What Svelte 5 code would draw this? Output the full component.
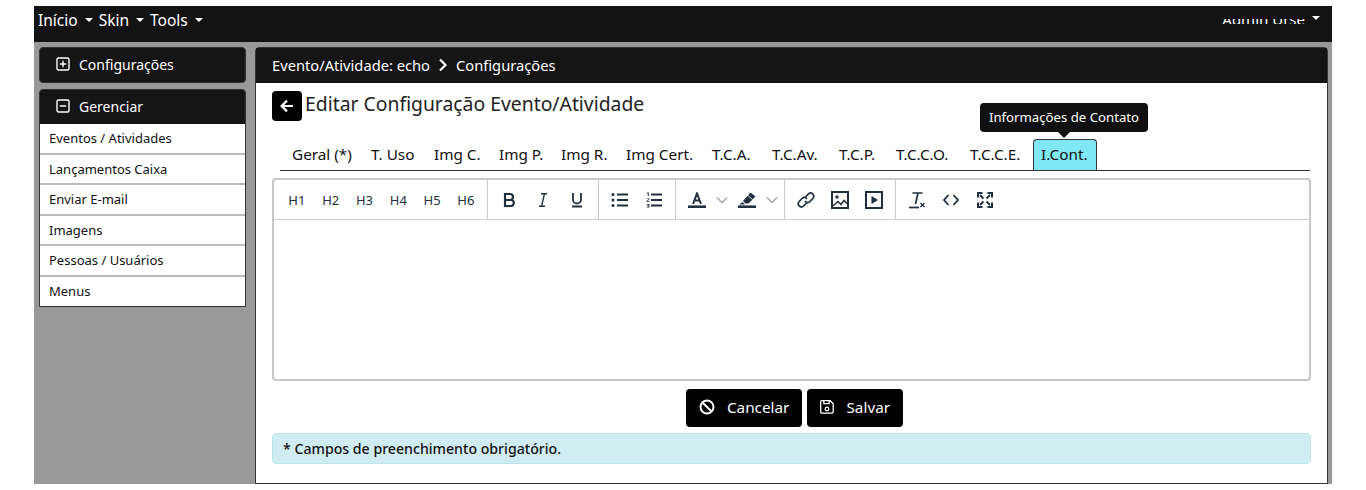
<script>
  const menu = ['Início', 'Skin', 'Tools'];
  const sideItems = ['Eventos / Atividades', 'Lançamentos Caixa', 'Enviar E-mail', 'Imagens', 'Pessoas / Usuários', 'Menus'];
  // widths keep each tab on the same column as the reference's font metrics
  const tabs = [
    { label: 'Geral (*)', width: 77 },
    { label: 'T. Uso', width: 61 },
    { label: 'Img C.', width: 63 },
    { label: 'Img P.', width: 60 },
    { label: 'Img R.', width: 63 },
    { label: 'Img Cert.', width: 84 },
    { label: 'T.C.A.', width: 58 },
    { label: 'T.C.Av.', width: 65 },
    { label: 'T.C.P.', width: 55 },
    { label: 'T.C.C.O.', width: 72 },
    { label: 'T.C.C.E.', width: 70 },
    { label: 'I.Cont.', width: 64, active: true }
  ];
  const headings = ['H1', 'H2', 'H3', 'H4', 'H5', 'H6'];
</script>

<div class="page">
  <nav class="navbar">
    <div class="nav-left">
      {#each menu as item}
        <span class="nav-item">{item}<i class="caret"></i></span>
      {/each}
    </div>
    <div class="nav-user">
      <div class="user-clip"><span>Admin Urse</span></div>
      <i class="caret user-caret"></i>
    </div>
  </nav>

  <div class="content">
    <aside class="sidebar">
      <div class="side-card">
        <div class="side-head">
          <svg width="14" height="14" viewBox="0 0 14 14" fill="none" stroke="#fff" stroke-width="1.4"><rect x="1" y="1" width="12" height="12" rx="1.5"/><path d="M7 3.8v6.4M3.8 7h6.4"/></svg>
          <span>Configurações</span>
        </div>
      </div>
      <div class="side-card manage">
        <div class="side-head">
          <svg width="14" height="14" viewBox="0 0 14 14" fill="none" stroke="#fff" stroke-width="1.4"><rect x="1" y="1" width="12" height="12" rx="1.5"/><path d="M3.8 7h6.4"/></svg>
          <span>Gerenciar</span>
        </div>
        <ul class="side-list">
          {#each sideItems as item}
            <li>{item}</li>
          {/each}
        </ul>
      </div>
    </aside>

    <main class="panel">
      <div class="panel-head">
        <span>Evento/Atividade: echo</span>
        <svg width="10" height="14" viewBox="0 0 10 14" fill="none" stroke="#fff" stroke-width="2.2"><path d="M2 1.5 7.5 7 2 12.5"/></svg>
        <span>Configurações</span>
      </div>

      <div class="panel-body">
        <div class="title-row">
          <button class="back" aria-label="Voltar">
            <svg width="16" height="16" viewBox="0 0 16 16" fill="none" stroke="#fff" stroke-width="2.2"><path d="M14 8H2.8M8 2.6 2.6 8 8 13.4"/></svg>
          </button>
          <h1>Editar Configuração Evento/Atividade</h1>
        </div>

        <div class="tabs">
          {#each tabs as tab}
            <span class="tab" class:active={tab.active} style="width: {tab.width}px">{tab.label}</span>
          {/each}
          <div class="tooltip">Informações de Contato</div>
        </div>

        <div class="editor">
          <div class="toolbar">
            <div class="group first">
              {#each headings as h}
                <span class="tool h">{h}</span>
              {/each}
            </div>
            <div class="group">
              <span class="tool"><svg width="16" height="16" viewBox="0 0 16 16" fill="none" stroke="#222f3e" stroke-width="2.2"><path d="M4 2h5a3 3 0 0 1 0 6H4zM4 8h5.800a3 3 0 0 1 0 6H4zM4 1v14"/></svg></span>
              <span class="tool"><svg width="16" height="16" viewBox="0 0 16 16" fill="none" stroke="#222f3e" stroke-width="1.4"><path d="M6 1.700h6M4 14.300h6M9.500 1.700 6.500 14.300"/></svg></span>
              <span class="tool"><svg width="16" height="16" viewBox="0 0 16 16" fill="none" stroke="#222f3e" stroke-width="1.800"><path d="M4 1v6.500a4 4 0 0 0 8 0V1M3 14.500h10"/></svg></span>
            </div>
            <div class="group">
              <span class="tool"><svg width="18" height="16" viewBox="0 0 18 16" fill="#222f3e"><circle cx="2" cy="2.500" r="1.500"/><circle cx="2" cy="8" r="1.500"/><circle cx="2" cy="13.500" r="1.500"/><path d="M6 1.500h11v2H6zM6 7h11v2H6zM6 12.500h11v2H6z"/></svg></span>
              <span class="tool"><svg width="16" height="16" viewBox="0 0 16 16" fill="#222f3e"><path d="M5 1.500h11v2H5zM5 7h11v2H5zM5 12.500h11v2H5z"/><path d="M1 .5h1.800v3.500h-1V1.500H1zM.6 6.400h2.800v1.200L1.800 9h1.600v.8H.6V9l1.800-1.500v-.4H.6zM.6 12h2.800v3.500H.6v-.8h1.900v-.5H1.300v-.7h1.200v-.7H.6z"/></svg></span>
            </div>
            <div class="group">
              <span class="tool"><svg width="18" height="16" viewBox="0 0 18 16" fill="none" stroke="#222f3e"><path stroke-width="2" d="M5 12 9 1.500 13 12M6.400 8.500h5.200"/><path stroke-width="2.600" d="M0 14.700h18"/></svg></span>
              <span class="chev"><svg width="12" height="8" viewBox="0 0 12 8" fill="none" stroke="#a9adb3" stroke-width="1.600"><path d="M1 1.500 6 6.500 11 1.500"/></svg></span>
              <span class="tool"><svg width="18" height="16" viewBox="0 0 18 16" fill="#222f3e"><path d="M12.500.5 17.500 4.500 10.500 11.500H7.500L5 9z"/><path d="M4.500 10 7 12.500H1z"/><path d="M0 13.400h18V16H0z"/><path d="M10 3.500 14.500 7.500" stroke="#fff" stroke-width=".8"/></svg></span>
              <span class="chev"><svg width="12" height="8" viewBox="0 0 12 8" fill="none" stroke="#a9adb3" stroke-width="1.600"><path d="M1 1.500 6 6.500 11 1.500"/></svg></span>
            </div>
            <div class="group">
              <span class="tool"><svg width="18" height="18" viewBox="0 0 18 18" fill="none" stroke="#222f3e" stroke-width="1.700" stroke-linecap="round"><path d="M8.500 6 11.500 2.800a3.200 3.200 0 0 1 4.500 4.500L13 10.500a3.200 3.200 0 0 1-4.500 0"/><path d="M9.500 12 6.500 15.200a3.200 3.200 0 0 1-4.500-4.500L5 7.500a3.200 3.200 0 0 1 4.500 0"/></svg></span>
              <span class="tool"><svg width="18" height="18" viewBox="0 0 18 18" fill="none" stroke="#222f3e" stroke-width="2"><rect x="1" y="1" width="16" height="16"/><path stroke-width="1.500" d="M2 15 7 10.500 10 13.500 13 9.500 16.500 13"/><circle cx="6" cy="6" r="1.700" fill="#222f3e" stroke="none"/></svg></span>
              <span class="tool"><svg width="18" height="18" viewBox="0 0 18 18" fill="none" stroke="#222f3e" stroke-width="2"><rect x="1" y="1" width="16" height="16"/><path d="M6.500 5v8L13 9z" fill="#222f3e" stroke="none"/></svg></span>
            </div>
            <div class="group last">
              <span class="tool"><svg width="18" height="18" viewBox="0 0 18 18" fill="none" stroke="#222f3e"><path stroke-width="1.700" d="M4.500 2h10M10 2 7.500 13"/><path stroke-width="1.700" d="M1 16.500h10"/><path stroke-width="1.400" d="M12.500 12l4 4M16.500 12l-4 4"/></svg></span>
              <span class="tool"><svg width="16" height="12" viewBox="0 0 16 12" fill="none" stroke="#222f3e" stroke-width="1.800"><path d="M5.500 1 1 6l4.500 5M10.500 1 15 6l-4.500 5"/></svg></span>
              <span class="tool"><svg width="16" height="16" viewBox="0 0 16 16" fill="none" stroke="#222f3e" stroke-width="2"><path d="M5.500 1H1v4.500M10.500 1H15v4.500M5.500 15H1v-4.500M10.500 15H15v-4.500"/><path stroke-width="1.800" d="M3 3l3.500 3.500M13 3 9.500 6.500M3 13l3.500-3.500M13 13 9.500 9.500"/></svg></span>
            </div>
          </div>
          <div class="editor-area"></div>
        </div>

        <div class="actions">
          <button class="btn">
            <svg width="16" height="16" viewBox="0 0 16 16" fill="none" stroke="#fff" stroke-width="2"><circle cx="8" cy="8" r="6.500"/><path d="M3.500 3.500l9 9"/></svg>
            Cancelar
          </button>
          <button class="btn">
            <svg width="14" height="14" viewBox="0 0 14 14" fill="none" stroke="#fff" stroke-width="1.300"><path d="M1.700.7h8.500l3 3v8a1.500 1.500 0 0 1-1.500 1.500H1.700a1 1 0 0 1-1-1V1.700a1 1 0 0 1 1-1z"/><path d="M3.800.7v3h5.400v-3"/><circle cx="7" cy="9" r="1.800"/></svg>
            Salvar
          </button>
        </div>

        <div class="alert">* Campos de preenchimento obrigatório.</div>
      </div>
    </main>
  </div>
</div>

<style>
  :global(body) {
    margin: 0;
    background: #fff;
    font-family: "Noto Sans", "Open Sans", sans-serif;
  }

  .page {
    width: 1298px;
    height: 478px;
    margin: 6px 0 0 34px;
    background: #999;
    display: flex;
    flex-direction: column;
  }

  .navbar {
    height: 36px;
    flex: none;
    background: #131313;
    color: #fff;
    display: flex;
    justify-content: space-between;
    padding: 0 12px 0 4px;
  }

  .nav-left {
    display: flex;
    gap: 6px;
    height: 28px;
    align-items: center;
    font-size: 15.500px;
  }

  .nav-item {
    display: flex;
    align-items: center;
  }

  .caret {
    display: block;
    width: 0;
    height: 0;
    margin-left: 7px;
    border-left: 4px solid transparent;
    border-right: 4px solid transparent;
    border-top: 4px solid #fff;
  }

  .nav-user {
    display: flex;
    align-items: flex-start;
  }

  .user-clip {
    height: 5px;
    margin-top: 13px;
    overflow: hidden;
    font-size: 15px;
    line-height: 16px;
    display: flex;
    align-items: flex-end;
  }

  .user-clip span {
    margin-bottom: -3px;
  }

  .user-caret {
    margin-top: 10px;
  }

  .content {
    flex: 1;
    min-height: 0;
    display: flex;
    gap: 9px;
    padding: 5px 4px 0 5px;
  }

  .sidebar {
    width: 207px;
    flex: none;
    display: flex;
    flex-direction: column;
    gap: 6px;
  }

  .side-card {
    border: 1px solid #333;
    border-radius: 4px;
    background: #151515;
    overflow: hidden;
  }

  .side-card.manage {
    border-radius: 4px 4px 0 0;
  }

  .side-head {
    height: 34px;
    box-sizing: border-box;
    display: flex;
    align-items: center;
    gap: 9px;
    padding: 0 0 2px 16px;
    color: #fff;
    font-size: 14px;
  }

  .side-list {
    list-style: none;
    margin: 0;
    padding: 0;
    background: #fff;
  }

  .side-list li {
    height: 28.500px;
    padding-left: 9px;
    border-bottom: 2px solid #bbb;
    font-size: 13px;
    line-height: 29.500px;
    color: #111;
  }

  .side-list li:last-child {
    height: 29.500px;
    border-bottom: 0;
  }

  .panel {
    flex: 1;
    min-width: 0;
    background: #fff;
    border: 1px solid #333;
    border-radius: 4px 4px 0 0;
    display: flex;
    flex-direction: column;
  }

  .panel-head {
    height: 35px;
    box-sizing: border-box;
    flex: none;
    background: #151515;
    color: #fff;
    font-size: 14.700px;
    display: flex;
    align-items: center;
    gap: 8px;
    padding: 0 0 2px 16px;
  }

  .panel-body {
    padding: 8px 16px 0;
  }

  .title-row {
    display: flex;
    align-items: flex-start;
    gap: 3px;
    height: 30px;
  }

  .back {
    width: 30px;
    height: 30px;
    border: 0;
    padding: 0;
    border-radius: 4px;
    background: #000;
    display: flex;
    align-items: center;
    justify-content: center;
  }

  h1 {
    margin: 0;
    font-size: 19.350px;
    font-weight: 400;
    line-height: 26px;
    color: #222;
  }

  .tabs {
    position: relative;
    margin: 18px 0 0 8px;
    padding-left: 2px;
    box-sizing: border-box;
    width: 1030px;
    height: 32px;
    display: flex;
    border-bottom: 1px solid #333;
  }

  .tab {
    flex: none;
    padding: 0 0 0 8px;
    margin: 0 1px;
    line-height: 29px;
    font-size: 15.300px;
    color: #111;
    border: 1px solid transparent;
    border-bottom: 0;
    border-radius: 4px 4px 0 0;
    white-space: nowrap;
    box-sizing: border-box;
    height: 31px;
  }

  .tab.active {
    padding-left: 7px;
    background: #80e8f5;
    border-color: #333;
  }

  .tooltip {
    position: absolute;
    left: 700px;
    top: -36px;
    width: 168px;
    height: 29px;
    background: #111;
    color: #fff;
    border-radius: 4px;
    font-size: 13.200px;
    line-height: 29px;
    text-align: center;
  }

  .tooltip::after {
    content: '';
    position: absolute;
    left: 78px;
    top: 29px;
    border-left: 6px solid transparent;
    border-right: 6px solid transparent;
    border-top: 6px solid #111;
  }

  .editor {
    margin-top: 7px;
    height: 203px;
    box-sizing: border-box;
    border: 2px solid #c8c8c8;
    border-radius: 4px;
    display: flex;
    flex-direction: column;
  }

  .toolbar {
    height: 40px;
    box-sizing: border-box;
    flex: none;
    display: flex;
    border-bottom: 1px solid #ccc;
  }

  .group {
    display: flex;
    align-items: center;
    padding: 0 4px;
    border-right: 1px solid #ccc;
  }

  .group.first {
    padding-left: 6px;
  }

  .group.last {
    border-right: 0;
  }

  .tool {
    width: 34px;
    display: flex;
    align-items: center;
    justify-content: center;
    color: #222f3e;
  }

  .tool.h {
    width: 33.800px;
    font-size: 13px;
  }

  .chev {
    width: 16px;
    display: flex;
    justify-content: center;
  }

  .editor-area {
    flex: 1;
  }

  .actions {
    margin-top: 8px;
    padding-left: 6px;
    display: flex;
    justify-content: center;
    gap: 5px;
  }

  .btn {
    height: 38px;
    border: 0;
    border-radius: 4px;
    background: #000;
    color: #fff;
    font-family: inherit;
    font-size: 15.300px;
    padding: 0 13px 2px;
    display: flex;
    align-items: center;
    gap: 12px;
  }

  .alert {
    margin-top: 6px;
    height: 31px;
    box-sizing: border-box;
    background: #d1ecf1;
    border: 1px solid #bee5eb;
    border-radius: 4px;
    padding-left: 10px;
    font-size: 14.150px;
    font-weight: 500;
    line-height: 29px;
    color: #111;
  }
</style>
